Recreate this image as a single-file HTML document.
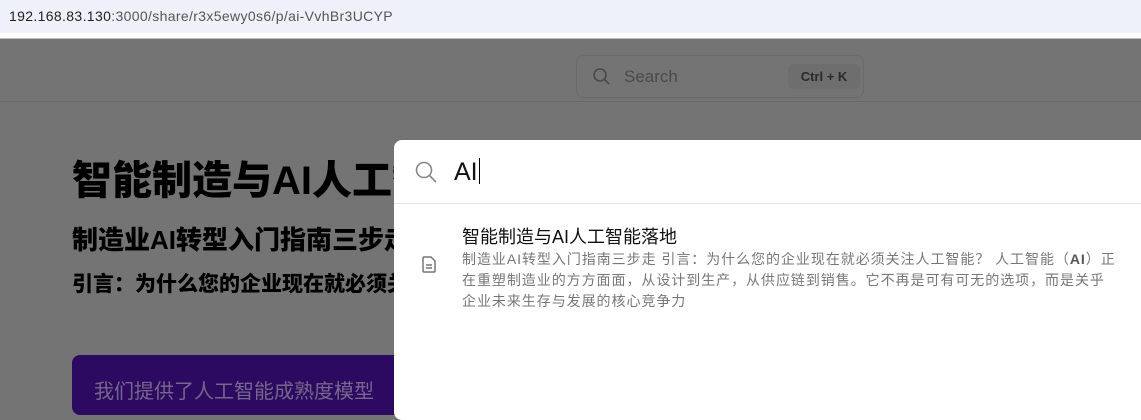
<!DOCTYPE html>
<html><head><meta charset="utf-8"><style>
*{margin:0;padding:0;box-sizing:border-box}
body{width:1141px;height:407px;overflow:hidden;background:#747474;font-family:"Liberation Sans","Noto Sans CJK SC",sans-serif;position:relative}
.addr{position:absolute;left:0;top:0;width:1141px;height:33px;background:#eef1f9;font-size:14px;color:#222;padding:8px 0 0 9px;letter-spacing:0.35px}
.addr span{color:#555}
.strip{position:absolute;left:0;top:33px;width:1141px;height:6px;background:#fff;border-bottom:1px solid #bbb}
.hdrline{position:absolute;left:0;top:101px;width:1141px;height:1px;background:#6a6a6a}
.search{position:absolute;left:576px;top:55px;width:288px;height:43px;border:1px solid #6a6a6a;border-radius:8px}
.search .t{position:absolute;left:47px;top:11px;font-size:17px;color:#4a4a4a}
.kbd{position:absolute;left:211px;top:8px;width:72px;height:25px;background:#6e6e6e;border-radius:5px;font-size:13px;font-weight:bold;color:#2a2a2a;text-align:center;line-height:25px}
h1{position:absolute;left:72px;top:148px;font-size:40px;font-weight:900;color:#000;white-space:nowrap}
h2{position:absolute;left:72px;top:220px;font-size:26px;font-weight:900;color:#000;white-space:nowrap}
h3{position:absolute;left:72px;top:268px;font-size:21px;font-weight:900;color:#000;white-space:nowrap}
.purple{position:absolute;left:72px;top:355px;width:400px;height:60px;background:#2c0a62;border-radius:8px;color:#74678a;font-size:20px;padding:20px 0 0 22px;white-space:nowrap}
.modal{position:absolute;left:394px;top:140px;width:760px;height:280px;background:#fff;border-radius:8px;z-index:2}
.inrow{height:64px;border-bottom:1px solid #e5e5e5;position:relative}
.inrow .q{position:absolute;left:60px;top:18px;font-size:25px;color:#111}
.cursor{display:inline-block;width:1px;height:26px;background:#000;vertical-align:-4px;margin-left:1px}
.title{position:absolute;left:68px;top:83px;font-size:18px;color:#111}
.desc{position:absolute;left:68px;top:109px;font-size:14px;line-height:21px;color:#777;letter-spacing:0.95px;white-space:nowrap}
</style></head><body>
<div class="addr">192.168.83.130<span>:3000/share/r3x5ewy0s6/p/ai-VvhBr3UCYP</span></div>
<div class="strip"></div>
<div class="hdrline"></div>
<div class="search">
<svg style="position:absolute;left:15px;top:11px" width="20" height="20" viewBox="0 0 20 20"><circle cx="8" cy="8" r="6" fill="none" stroke="#4a4a4a" stroke-width="1.6"/><path d="M12.5 12.5L17 17" stroke="#4a4a4a" stroke-width="1.6"/></svg>
<div class="t">Search</div><div class="kbd">Ctrl + K</div></div>
<h1>智能制造与AI人工智能落地</h1>
<h2>制造业AI转型入门指南三步走</h2>
<h3>引言：为什么您的企业现在就必须关注人工智能？</h3>
<div class="purple">我们提供了人工智能成熟度模型</div>
<div class="modal">
<div class="inrow">
<svg style="position:absolute;left:20px;top:20px" width="24" height="24" viewBox="0 0 24 24"><circle cx="10" cy="10" r="7.5" fill="none" stroke="#888" stroke-width="1.6"/><path d="M15.5 15.5L22 22" stroke="#888" stroke-width="1.6"/></svg>
<div class="q">AI<span class="cursor"></span></div></div>
<svg style="position:absolute;left:28px;top:116px" width="14" height="17" viewBox="0 0 14 17"><path d="M2 1h7l4 4v10a1 1 0 0 1-1 1H2a1 1 0 0 1-1-1V2a1 1 0 0 1 1-1z" fill="none" stroke="#777" stroke-width="1.5"/><path d="M4 9h6M4 12h6" stroke="#777" stroke-width="1.4"/></svg>
<div class="title">智能制造与AI人工智能落地</div>
<div class="desc">制造业AI转型入门指南三步走 引言：为什么您的企业现在就必须关注人工智能？ 人工智能（<b style="color:#555">AI</b>）正<br>在重塑制造业的方方面面，从设计到生产，从供应链到销售。它不再是可有可无的选项，而是关乎<br>企业未来生存与发展的核心竞争力</div>
</div>
</body></html>
